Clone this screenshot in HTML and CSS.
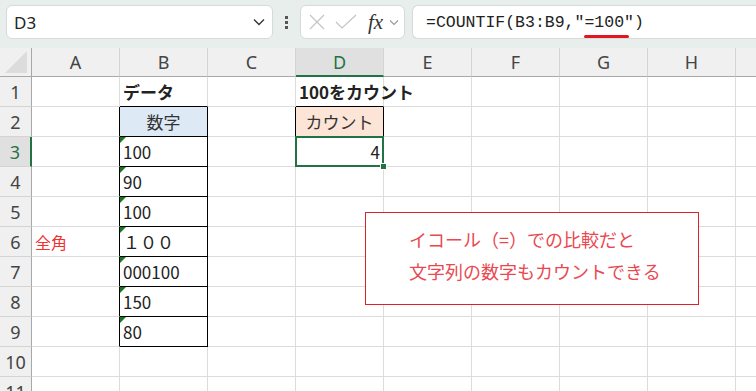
FILE: index.html
```html
<!DOCTYPE html>
<html lang="ja">
<head>
  <meta charset="UTF-8">
  <title>COUNTIF</title>
  <link rel="stylesheet" href="styles.css">
</head>
<body>
  <div class="topbar">
    <div class="namebox">
      <span>D3</span>
      <svg class="chev" width="12" height="8" viewBox="0 0 12 8"><path d="M1 1.5l5 5 5-5" fill="none" stroke="#333" stroke-width="1.3"/></svg>
    </div>
    <div class="dots"><i></i><i></i><i></i></div>
    <div class="fbtns">
      <svg width="18" height="18" viewBox="0 0 18 18"><path d="M2 2l14 14M16 2L2 16" fill="none" stroke="#c4c4c4" stroke-width="1.2"/></svg>
      <svg width="22" height="18" viewBox="0 0 22 18"><path d="M1 9l6 6L21 2" fill="none" stroke="#c4c4c4" stroke-width="1.2"/></svg>
      <span class="fx">fx</span>
      <svg width="10" height="7" viewBox="0 0 10 7"><path d="M1 1.5l4 4 4-4" fill="none" stroke="#999" stroke-width="1.1"/></svg>
    </div>
    <div class="formula">=COUNTIF(B3:B9,"<span class="mark">=100</span>")</div>
  </div>

  <div class="sheet">
    <div class="corner"></div><div class="ch">A</div><div class="ch">B</div><div class="ch">C</div><div class="ch sel">D</div><div class="ch">E</div><div class="ch">F</div><div class="ch">G</div><div class="ch">H</div><div class="ch"></div>

    <div class="rh">1</div><div class="c"></div><div class="c b kb">データ</div><div class="c"></div><div class="c b kb">100をカウント</div><div class="c"></div><div class="c"></div><div class="c"></div><div class="c"></div><div class="c"></div>

    <div class="rh">2</div><div class="c kr"></div><div class="c box head blue">数字</div><div class="c kr"></div><div class="c box head peach">カウント</div><div class="c"></div><div class="c"></div><div class="c"></div><div class="c"></div><div class="c"></div>

    <div class="rh sel">3</div><div class="c kr"></div><div class="c box err">100</div><div class="c"></div><div class="c active num">4</div><div class="c"></div><div class="c"></div><div class="c"></div><div class="c"></div><div class="c"></div>

    <div class="rh">4</div><div class="c kr"></div><div class="c box err">90</div><div class="c"></div><div class="c"></div><div class="c"></div><div class="c"></div><div class="c"></div><div class="c"></div><div class="c"></div>

    <div class="rh">5</div><div class="c kr"></div><div class="c box err">100</div><div class="c"></div><div class="c"></div><div class="c"></div><div class="c"></div><div class="c"></div><div class="c"></div><div class="c"></div>

    <div class="rh">6</div><div class="c kr note">全角</div><div class="c box err">１００</div><div class="c"></div><div class="c"></div><div class="c"></div><div class="c"></div><div class="c"></div><div class="c"></div><div class="c"></div>

    <div class="rh">7</div><div class="c kr"></div><div class="c box err">000100</div><div class="c"></div><div class="c"></div><div class="c"></div><div class="c"></div><div class="c"></div><div class="c"></div><div class="c"></div>

    <div class="rh">8</div><div class="c kr"></div><div class="c box err">150</div><div class="c"></div><div class="c"></div><div class="c"></div><div class="c"></div><div class="c"></div><div class="c"></div><div class="c"></div>

    <div class="rh">9</div><div class="c kr"></div><div class="c box err">80</div><div class="c"></div><div class="c"></div><div class="c"></div><div class="c"></div><div class="c"></div><div class="c"></div><div class="c"></div>

    <div class="rh">10</div><div class="c"></div><div class="c"></div><div class="c"></div><div class="c"></div><div class="c"></div><div class="c"></div><div class="c"></div><div class="c"></div><div class="c"></div>

    <div class="rh">11</div><div class="c"></div><div class="c"></div><div class="c"></div><div class="c"></div><div class="c"></div><div class="c"></div><div class="c"></div><div class="c"></div><div class="c"></div>
  </div>

  <div class="callout">
    <p>イコール（=）での比較だと</p>
    <p>文字列の数字もカウントできる</p>
  </div>
</body>
</html>
```

FILE: styles.css
```css
/* Excel-like sheet */

body {
  margin: 0;
  width: 756px;
  height: 391px;
  overflow: hidden;
  background: #fff;
  font-family: "Noto Sans CJK JP", "Noto Sans", sans-serif;
  color: #222;
}

.topbar {
  display: flex;
  align-items: flex-start;
  height: 48px;
  box-sizing: border-box;
  padding: 5px 0 0 6px;
  background: #e8eeeb;
}

.namebox,
.fbtns,
.formula {
  height: 34px;
  box-sizing: border-box;
  background: #fff;
  border: 1px solid #d6dbd9;
  border-radius: 6px;
  display: flex;
  align-items: center;
}

.namebox {
  width: 267px;
  flex: none;
  padding: 0 7px 0 7px;
  justify-content: space-between;
  font-family: "Noto Sans", sans-serif;
  font-size: 17px;
  color: #222;
}

.dots {
  width: 27px;
  flex: none;
  display: flex;
  flex-direction: column;
  align-items: center;
  gap: 2px;
  padding-top: 11px;
}

.dots i {
  width: 3px;
  height: 3px;
  background: #555;
}

.fbtns {
  width: 105px;
  flex: none;
  margin-right: 7px;
  padding-left: 7px;
  gap: 9px;
}

.fbtns .fx {
  font-family: "Liberation Serif", serif;
  font-style: italic;
  font-size: 21px;
  color: #333;
  margin-left: 2px;
  margin-right: -3px;
}

.formula {
  width: 420px;
  flex: none;
  padding-left: 13px;
  font-family: "Liberation Mono", monospace;
  font-size: 16.5px;
  color: #222;
  border-right: none;
  border-radius: 6px 0 0 6px;
}

.mark {
  position: relative;
}

.mark::after {
  content: "";
  position: absolute;
  left: 0;
  right: -5px;
  bottom: -6px;
  height: 3px;
  border-radius: 2px;
  background: #e3161e;
}

/* grid */

.sheet {
  display: grid;
  grid-template-columns: 32px repeat(9, 88px);
  grid-template-rows: 29px;
  grid-auto-rows: 30px;
  font-size: 17px;
}

.sheet > div {
  box-sizing: border-box;
  border-right: 1px solid #dcdcdc;
  border-bottom: 1px solid #dcdcdc;
  white-space: nowrap;
  display: flex;
  align-items: center;
}

.sheet .corner {
  position: relative;
  background: #f0f0f0;
  border-right-color: #a8a8a8;
  border-bottom-color: #a8a8a8;
}

.corner::after {
  content: "";
  position: absolute;
  right: 4px;
  bottom: 3px;
  border-left: 22px solid transparent;
  border-bottom: 22px solid #dcdcdc;
}

.sheet .ch {
  background: #f0f0f0;
  justify-content: center;
  color: #444;
  font-family: "Noto Sans", sans-serif;
  font-size: 18px;
  border-bottom-color: #a8a8a8;
  border-right-color: #d4d4d4;
}

.sheet .ch.sel {
  background: #e0e0e0;
  color: #217346;
  border-bottom: 2px solid #217346;
}

.sheet .rh {
  background: #f0f0f0;
  justify-content: center;
  color: #444;
  font-family: "Noto Sans", sans-serif;
  font-size: 18px;
  border-right-color: #a8a8a8;
  border-bottom-color: #d4d4d4;
}

.sheet .rh.sel {
  background: #e0e0e0;
  color: #217346;
  border-right: 2px solid #217346;
}

.c {
  padding: 0 3px;
}

.sheet .kb {
  border-bottom-color: #000;
}

.sheet .kr {
  border-right-color: #000;
}

.sheet .box {
  border-right-color: #000;
  border-bottom-color: #000;
}

.b {
  font-weight: bold;
}

.head {
  justify-content: center;
  color: #333;
}

.blue {
  background: #dde9f5;
}

.peach {
  background: #fce4d6;
}

.err {
  position: relative;
}

.err::before {
  content: "";
  position: absolute;
  left: 0;
  top: 0;
  border-top: 6px solid #17781e;
  border-right: 6px solid transparent;
}

.num {
  justify-content: flex-end;
}

.active {
  position: relative;
}

.active::after {
  content: "";
  position: absolute;
  inset: -1px;
  border: 2px solid #217346;
}

.active::before {
  content: "";
  position: absolute;
  right: -4px;
  bottom: -4px;
  width: 5px;
  height: 5px;
  background: #217346;
  border: 1px solid #fff;
  z-index: 1;
}

.note {
  color: #f23030;
  font-size: 16px;
}

.callout {
  position: absolute;
  left: 365px;
  top: 212px;
  width: 334px;
  height: 93px;
  box-sizing: border-box;
  padding: 10px 0 0 43px;
  background: #fff;
  border: 1px solid #e0202a;
  color: #ea4850;
  font-size: 18px;
  line-height: 32px;
}

.callout p {
  margin: 0;
}
```
